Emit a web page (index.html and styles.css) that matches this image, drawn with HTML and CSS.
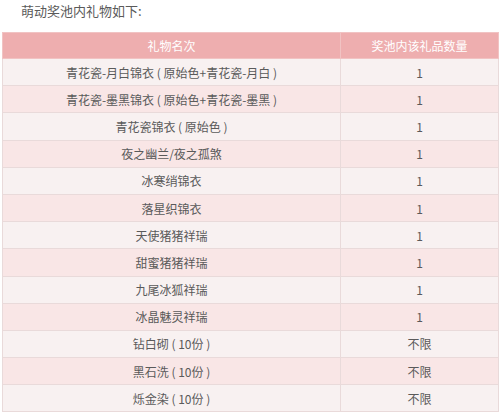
FILE: index.html
```html
<!DOCTYPE html>
<html lang="zh">
<head>
<meta charset="utf-8">
<link rel="stylesheet" href="styles.css">
</head>
<body>
<div class="page">
  <p class="intro">萌动奖池内礼物如下:</p>
  <table class="gifts">
    <thead>
      <tr><th class="c-name">礼物名次</th><th class="c-qty">奖池内该礼品数量</th></tr>
    </thead>
    <tbody>
      <tr><td>青花瓷-月白锦衣 ( 原始色+青花瓷-月白 )</td><td>1</td></tr>
      <tr><td>青花瓷-墨黑锦衣 ( 原始色+青花瓷-墨黑 )</td><td>1</td></tr>
      <tr><td>青花瓷锦衣 ( 原始色 )</td><td>1</td></tr>
      <tr><td>夜之幽兰/夜之孤煞</td><td>1</td></tr>
      <tr><td>冰寒绡锦衣</td><td>1</td></tr>
      <tr><td>落星织锦衣</td><td>1</td></tr>
      <tr><td>天使猪猪祥瑞</td><td>1</td></tr>
      <tr><td>甜蜜猪猪祥瑞</td><td>1</td></tr>
      <tr><td>九尾冰狐祥瑞</td><td>1</td></tr>
      <tr><td>冰晶魅灵祥瑞</td><td>1</td></tr>
      <tr><td>钻白砌 ( 10份 )</td><td>不限</td></tr>
      <tr><td>黑石洗 ( 10份 )</td><td>不限</td></tr>
      <tr><td>烁金染 ( 10份 )</td><td>不限</td></tr>
    </tbody>
  </table>
</div>
</body>
</html>
```
FILE: styles.css
```css
html, body {
  margin: 0;
  padding: 0;
  background: #ffffff;
}
.page {
  padding: 0 4px 0 2px;
  font-family: "Microsoft YaHei", "Noto Sans CJK SC", "Liberation Sans", sans-serif;
  color: #5a5a5a;
}
.intro {
  margin: 0;
  padding: 2px 0 0 19px;
  height: 32px;
  box-sizing: border-box;
  font-size: 13px;
  line-height: 18px;
  color: #5a5a5a;
}
.gifts {
  width: 494px;
  border-collapse: collapse;
  table-layout: fixed;
  font-size: 12px;
}
.gifts th, .gifts td {
  border: 1px solid #e9dada;
  text-align: center;
  padding: 0;
  font-weight: normal;
}
.gifts th {
  background: #eeaeaf;
  color: #ffffff;
  height: 25px;
  border-color: #f1c3c3;
}
.c-name { width: 337px; }
.c-qty { width: 157px; }
.gifts td {
  height: 26.2px;
  color: #5a5a5a;
}
.gifts tbody tr:nth-child(odd) td { background: #f8f1f1; }
.gifts tbody tr:nth-child(even) td { background: #f9e6e6; }
```
